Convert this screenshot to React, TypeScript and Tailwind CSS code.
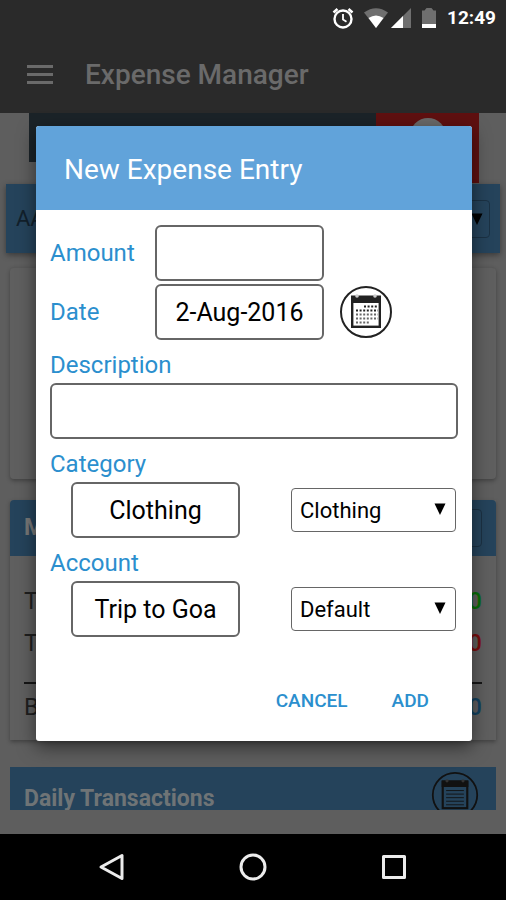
import React from "react";
import { clsx } from "clsx";

const CalendarIcon = ({ lined = false, className }: { lined?: boolean; className?: string }) => (
  <svg viewBox="0 0 54 54" fill="none" className={className} aria-hidden="true">
    <circle cx="27" cy="27" r="25" stroke="currentColor" strokeWidth="2" />
    <rect x="13.2" y="12.2" width="27.6" height="29.6" stroke="currentColor" strokeWidth="2.4" />
    <path d="M12 10.5h30v7.500H12z" fill="currentColor" />
    <circle cx="18" cy="11" r="1.800" fill={lined ? "#333" : "#ccc"} />
    <circle cx="36" cy="11" r="1.800" fill={lined ? "#333" : "#ccc"} />
    {lined ? (
      <path d="M17 22h20M17 26h20M17 30h20M17 34h20M17 38h20" stroke="currentColor" strokeWidth="1" />
    ) : (
      <>
        <path d="M25 21.5h14M17 25.5h22" stroke="currentColor" strokeWidth="2" strokeDasharray="2 1.6" />
        <path
          d="M17 29.5h22M17 33.5h22M17 37.5h14"
          stroke="#666"
          strokeWidth="2"
          strokeDasharray="2 1.6"
        />
      </>
    )}
  </svg>
);

const Caret = ({ className }: { className?: string }) => (
  <svg viewBox="0 0 12 12" className={clsx("pointer-events-none absolute h-3 w-3", className)} aria-hidden="true">
    <path d="M0.500 0.500h11L6 12z" fill="#000" />
  </svg>
);

const StatusBar = () => (
  <div className="flex h-9 items-center justify-end pr-2.5 text-white">
    <svg viewBox="0 0 24 24" className="mr-2 h-6 w-6" fill="none" stroke="currentColor" aria-hidden="true">
      <circle cx="12" cy="13" r="8.500" strokeWidth="2.400" />
      <path d="M12 8v5.500l3.500 2.200" strokeWidth="1.800" />
      <path d="M2.500 6.500l4-3.500M21.500 6.500l-4-3.500" strokeWidth="2.600" />
    </svg>
    <svg viewBox="0 0 26 20" className="mr-0.5 h-5 w-[26px]" aria-hidden="true">
      <path d="M1 4.500Q13-4 25 4.500L13 20z" fill="#6f6f6f" />
      <path d="M5.500 10Q13 5 20.500 10L13 20z" fill="currentColor" />
    </svg>
    <svg viewBox="0 0 20 20" className="mr-2.5 h-5 w-5" aria-hidden="true">
      <path d="M20 0v20H0z" fill="#6f6f6f" />
      <path d="M12 8v12H0z" fill="currentColor" />
    </svg>
    <svg viewBox="0 0 16 22" className="mr-2.5 h-[22px] w-4" aria-hidden="true">
      <path d="M1 3.500h2.500L5.500 1h5l2 2.500H15V17H1z" fill="#6f6f6f" />
      <path d="M1 17h14v4H1z" fill="currentColor" />
    </svg>
    <span className="text-[19px] font-bold">12:49</span>
  </div>
);

const SummaryRow = ({ label, value, color }: { label: string; value: string; color: string }) => (
  <div className="flex h-[42px] items-center justify-between">
    <span className="text-2xl text-[#1f1f1f]">{label}</span>
    <span className={clsx("text-2xl font-medium", color)}>{value}</span>
  </div>
);

const Dashboard = () => (
  <main className="flex flex-1 flex-col bg-[#5e5e5e]">
    <div className="mr-[27px] ml-[29px] flex h-[70px]">
      <div className="h-[49px] flex-1 bg-[#1b2328]" />
      <div className="flex w-[103px] justify-center overflow-hidden bg-[#5f1010]">
        <div className="mt-[5px] h-9 w-9 rounded-full bg-[#6a6a6a]" />
      </div>
    </div>

    <div className="mx-1.5 mt-px flex h-[69px] items-center justify-between bg-[#25435b] px-2.5 shadow-[0_2px_6px_rgba(0,0,0,0.4)]">
      <span className="text-[22px] text-[#12202b]">AA</span>
      <div className="relative h-[38px] w-24 rounded-sm border border-[#1b3143]">
        <Caret className="top-3 right-1.5" />
      </div>
    </div>

    <div className="mx-2.5 mt-3.5 h-[212px] rounded-sm border-t border-[#585858] bg-[#5f5f5f] shadow-[0_2px_4px_rgba(0,0,0,0.3)]" />

    <section className="mx-2.5 mt-[21px] h-60 bg-[#5f5f5f] shadow-[0_2px_4px_rgba(0,0,0,0.3)]">
      <div className="flex h-14 items-center justify-between rounded-t-sm bg-[#25435b] px-3.5">
        <h2 className="text-[23px] font-bold text-[#777]">M</h2>
        <div className="h-[38px] w-24 rounded-sm border border-[#1b3143]" />
      </div>
      <div className="px-3.5 pt-6">
        <SummaryRow label="T" value="0" color="text-[#067006]" />
        <SummaryRow label="T" value="0" color="text-[#7a0d0d]" />
        <hr className="mt-[18px] mb-0.5 border-t-2 border-[#161616]" />
        <SummaryRow label="B" value="0" color="text-[#12415f]" />
      </div>
    </section>

    <div className="mx-2.5 mt-[27px] mb-6 flex h-[43px] items-start justify-between overflow-hidden bg-[#25435b] pr-[17px] pl-3.5">
      <h2 className="pt-5 text-[23px] leading-none font-bold text-[#6f7476]">Daily Transactions</h2>
      <CalendarIcon lined className="mt-1 h-12 w-12 shrink-0 text-[#111]" />
    </div>
  </main>
);

const NavBar = () => (
  <nav className="flex h-[66px] items-center justify-center gap-[113px] bg-black text-[#ececec]">
    <button type="button" aria-label="Back">
      <svg viewBox="0 0 28 28" className="h-7 w-7" fill="none" stroke="currentColor" strokeWidth="3" strokeLinejoin="round">
        <path d="M24 2.500v23L3 14z" />
      </svg>
    </button>
    <button type="button" aria-label="Home">
      <svg viewBox="0 0 28 28" className="h-7 w-7" fill="none" stroke="currentColor" strokeWidth="3">
        <circle cx="14" cy="14" r="12" />
      </svg>
    </button>
    <button type="button" aria-label="Recent apps">
      <svg viewBox="0 0 28 28" className="h-7 w-7" fill="none" stroke="currentColor" strokeWidth="3" strokeLinejoin="round">
        <path d="M3.500 3.500h21v21h-21z" />
      </svg>
    </button>
  </nav>
);

const inputStyle = "h-14 rounded-md border-2 border-[#666] bg-white text-center text-[25px] text-black outline-none";
const labelStyle = "text-2xl text-[#2b8fce]";

interface PickerRowProps {
  id: string;
  label: string;
  value: string;
  option: string;
}

const PickerRow = ({ id, label, value, option }: PickerRowProps) => (
  <div>
    <label htmlFor={id} className={clsx("block h-[43px] leading-[50px]", labelStyle)}>
      {label}
    </label>
    <div className="flex items-center justify-between pr-0.5 pl-[21px]">
      <input id={id} defaultValue={value} className={clsx("w-[169px]", inputStyle)} />
      <div className="relative">
        <select
          aria-label={label}
          defaultValue={option}
          className="block h-11 w-[165px] appearance-none rounded-sm border border-[#666] bg-white pl-2 text-[22px] text-black outline-none"
        >
          <option>{option}</option>
        </select>
        <Caret className="top-[15px] right-2.5" />
      </div>
    </div>
  </div>
);

const ExpenseDialog = () => (
  <form
    role="dialog"
    aria-labelledby="dialog-title"
    className="w-full overflow-hidden rounded-[3px] bg-white shadow-[0_6px_18px_rgba(0,0,0,0.5)]"
  >
    <h2 id="dialog-title" className="flex h-[84px] items-center bg-[#61a3da] px-7 pt-1 text-[28px] text-white">
      New Expense Entry
    </h2>
    <div className="px-3.5 pt-[15px]">
      <div className="flex items-center">
        <label htmlFor="amount" className={clsx("w-[105px]", labelStyle)}>
          Amount
        </label>
        <input id="amount" className={clsx("w-[169px]", inputStyle)} />
      </div>
      <div className="mt-[3px] flex items-center">
        <label htmlFor="date" className={clsx("w-[105px]", labelStyle)}>
          Date
        </label>
        <input id="date" defaultValue="2-Aug-2016" className={clsx("w-[169px]", inputStyle)} />
        <button type="button" aria-label="Pick a date" className="ml-[15px] text-[#222]">
          <CalendarIcon className="h-[54px] w-[54px]" />
        </button>
      </div>
      <label htmlFor="description" className={clsx("block h-[43px] leading-[50px]", labelStyle)}>
        Description
      </label>
      <input id="description" className={clsx("w-full", inputStyle)} />
      <PickerRow id="category" label="Category" value="Clothing" option="Clothing" />
      <PickerRow id="account" label="Account" value="Trip to Goa" option="Default" />
    </div>
    <div className="flex h-[104px] items-center justify-end gap-11 pt-6 pr-[43px] text-[19px] font-medium text-[#2b8fce]">
      <button type="button">CANCEL</button>
      <button type="button">ADD</button>
    </div>
  </form>
);

export default function App() {
  return (
    <div className="relative flex min-h-screen flex-col font-[Roboto,sans-serif]">
      <header className="h-[113px] bg-[#2a2a2a]">
        <StatusBar />
        <div className="flex h-[77px] items-center gap-8 pl-[27px] text-[#6a6a6a]">
          <button type="button" aria-label="Menu" className="flex w-[26px] flex-col gap-[5px]">
            <span className="h-[3px] w-full bg-[#6a6a6a]" />
            <span className="h-[3px] w-full bg-[#6a6a6a]" />
            <span className="h-[3px] w-full bg-[#6a6a6a]" />
          </button>
          <h1 className="text-[28px] font-medium">Expense Manager</h1>
        </div>
      </header>
      <Dashboard />
      <NavBar />
      <div className="absolute inset-x-0 top-0 pt-[126px] pr-[34px] pl-9">
        <ExpenseDialog />
      </div>
    </div>
  );
}
